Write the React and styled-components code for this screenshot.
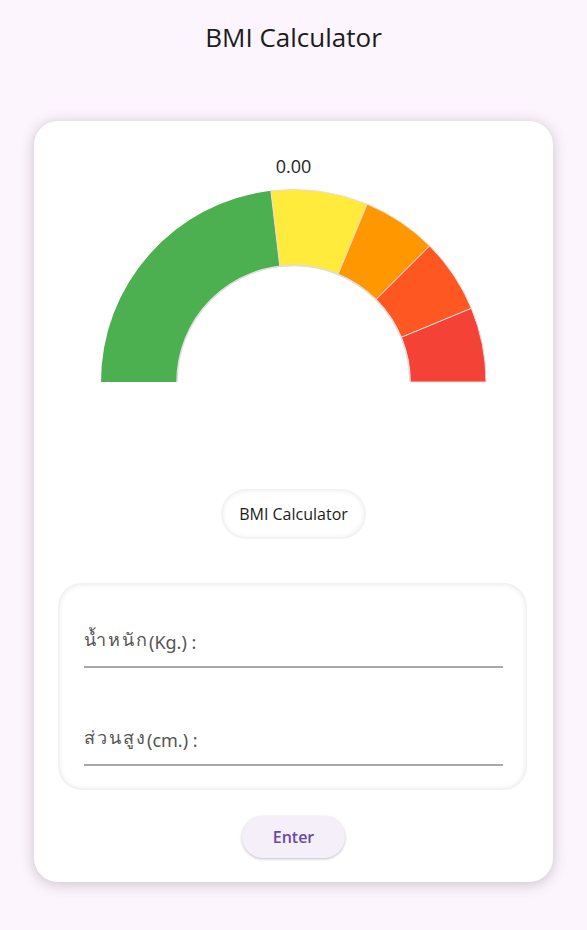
import React from 'react';
import styled, { createGlobalStyle } from 'styled-components';

const GlobalStyle = createGlobalStyle`
  html, body {
    margin: 0;
    padding: 0;
    background: #fdf5fd;
    font-family: "Open Sans", "Noto Sans", "DejaVu Sans", sans-serif;
  }
`;

const Page = styled.div`
  width: 587px;
  min-height: 930px;
  box-sizing: border-box;
  display: flex;
  flex-direction: column;
  align-items: center;
`;

const Title = styled.h1`
  margin: 17px 0 0;
  height: 40px;
  font-size: 26px;
  line-height: 40px;
  font-weight: 400;
  color: #1c1c1c;
`;

const Card = styled.div`
  margin-top: 64px;
  width: 519px;
  box-sizing: border-box;
  background: #fff;
  border-radius: 24px;
  box-shadow: 0 2px 14px rgba(80, 70, 90, 0.3);
  padding: 33px 24px 24px;
  display: flex;
  flex-direction: column;
  align-items: center;
`;

const GaugeValue = styled.div`
  font-size: 18px;
  line-height: 24px;
  color: #222;
  margin-bottom: 10px;
`;

const GaugeSvg = styled.svg`
  display: block;
`;

const Pill = styled.div`
  margin-top: 106px;
  height: 50px;
  padding: 0 18px;
  box-sizing: border-box;
  border-radius: 25px;
  display: flex;
  align-items: center;
  font-size: 16px;
  color: #1c1c1c;
  background: #fff;
  box-shadow: inset 0 0 6px rgba(0, 0, 0, 0.12);
`;

const FormBox = styled.div`
  margin-top: 44px;
  align-self: stretch;
  margin-right: 2px;
  height: 207px;
  box-sizing: border-box;
  border-radius: 24px;
  padding: 24px 24px 0 26px;
  box-shadow: inset 0 0 6px rgba(0, 0, 0, 0.13);
  display: flex;
  flex-direction: column;
  gap: 37px;
`;

const Field = styled.label`
  display: flex;
  align-items: flex-end;
  height: 47px;
  padding-bottom: 12px;
  border-bottom: 2px solid #a9a9ad;
  font-family: "Noto Sans", "Open Sans", "DejaVu Sans", sans-serif;
  font-size: 18px;
  color: #555;
`;

const Thai = styled.span`
  letter-spacing: 2px;
`;

const EnterButton = styled.button`
  margin-top: 26px;
  width: 103px;
  height: 42px;
  border: none;
  border-radius: 21px;
  background: #f4eff8;
  color: #6a4a9e;
  font-family: "Open Sans", "Noto Sans", sans-serif;
  font-weight: 600;
  font-size: 16px;
  box-shadow: 0 1px 3px rgba(0, 0, 0, 0.25);
  cursor: pointer;
`;

const CX = 193.5;
const CY = 194;
const R = 192.5;
const r = 116.5;

const segments = [
  { from: 0, to: 18.5, color: '#4caf50' },
  { from: 18.5, to: 25, color: '#ffeb3b' },
  { from: 25, to: 30, color: '#ff9800' },
  { from: 30, to: 35, color: '#ff5722' },
  { from: 35, to: 40, color: '#f44336' },
];

function pt(rad, v) {
  const a = Math.PI - (v / 40) * Math.PI;
  return [CX + rad * Math.cos(a), CY - rad * Math.sin(a)];
}

function arcPath(from, to) {
  const [x1, y1] = pt(R, from);
  const [x2, y2] = pt(R, to);
  const [x3, y3] = pt(r, to);
  const [x4, y4] = pt(r, from);
  return `M${x1},${y1} A${R},${R} 0 0 1 ${x2},${y2} L${x3},${y3} A${r},${r} 0 0 0 ${x4},${y4} Z`;
}

function Gauge() {
  return (
    <GaugeSvg width="387" height="195" viewBox="0 0 387 195">
      {segments.map((s, i) => (
        <path
          key={i}
          d={arcPath(s.from, s.to)}
          fill={s.color}
          stroke={i === 0 ? 'none' : '#f2d9d9'}
          strokeWidth="1"
        />
      ))}
      <path
        d={`M${CX - r},${CY} A${r},${r} 0 0 1 ${CX + r},${CY}`}
        fill="none"
        stroke="#dedede"
        strokeWidth="1.5"
      />
    </GaugeSvg>
  );
}

export default function App() {
  return (
    <Page>
      <GlobalStyle />
      <Title>BMI Calculator</Title>
      <Card>
        <GaugeValue>0.00</GaugeValue>
        <Gauge />
        <Pill>BMI Calculator</Pill>
        <FormBox>
          <Field><Thai>น้ำหนัก</Thai>(Kg.) :</Field>
          <Field><Thai>ส่วนสูง</Thai>(cm.) :</Field>
        </FormBox>
        <EnterButton>Enter</EnterButton>
      </Card>
    </Page>
  );
}
